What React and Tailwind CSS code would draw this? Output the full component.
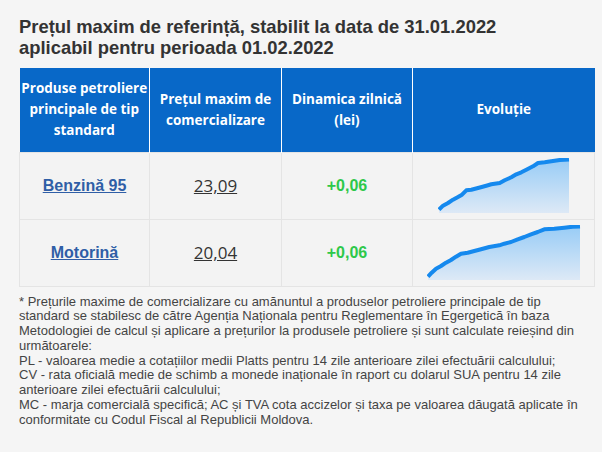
import React from 'react';

const rows = [
  {
    name: 'Benzină 95',
    price: '23,09',
    delta: '+0,06',
    chart: {
      w: 132,
      h: 55,
      pts: [
        [1, 51.7], [5, 47.7], [10, 45], [15, 41.7], [20, 39], [24, 36.7], [28.3, 32.3],
        [33.3, 31.7], [40, 30], [48.3, 27.7], [53.3, 26.3], [61.7, 25], [66.7, 22.3],
        [73.3, 19.3], [78.3, 16.3], [83.3, 14.3], [88.3, 11.7], [95, 8.3], [100, 5],
        [106.7, 4.3], [113.3, 3.3], [121.7, 2], [131, 1.4],
      ],
    },
  },
  {
    name: 'Motorină',
    price: '20,04',
    delta: '+0,06',
    chart: {
      w: 154,
      h: 55,
      pts: [
        [1, 51.7], [4.7, 47.7], [9, 43.7], [14, 41], [19, 37.7], [24, 35], [29, 31.7],
        [34, 28.7], [40.7, 27.7], [47.3, 26], [54, 24.3], [62.3, 22], [72.3, 20.3],
        [77.3, 18.7], [84, 17], [90.7, 14.3], [97.3, 12], [104, 9.3], [110.7, 7],
        [117.3, 4.3], [127.3, 3.7], [137.3, 2.7], [145.7, 1.7], [153, 1.4],
      ],
    },
  },
];

const Sparkline = ({ id, w, h, pts }) => {
  const line = pts.map((p, i) => `${i ? 'L' : 'M'}${p[0]},${p[1]}`).join(' ');
  const last = pts[pts.length - 1];
  const area = `${line} L${last[0]},${h} L${pts[0][0]},${h} Z`;
  return (
    <svg width={w} height={h} viewBox={`0 0 ${w} ${h}`} className="block mx-auto">
      <defs>
        <linearGradient id={id} x1="0" y1="0" x2="0" y2="1">
          <stop offset="0" stopColor="#98ccf6" />
          <stop offset="1" stopColor="#dde9f6" />
        </linearGradient>
      </defs>
      <path d={area} fill={`url(#${id})`} />
      <path d={line} fill="none" stroke="#1589ee" strokeWidth="4" strokeLinejoin="round" />
    </svg>
  );
};

const App = () => {
  return (
    <div className="min-h-[452px] bg-[#f5f5f5] pt-4 pl-[19px] pr-2 font-['Liberation_Sans',Arial,sans-serif]">
      <h2 className="text-[18.4px] leading-[21px] font-bold text-[#333]">
        Prețul maxim de referință, stabilit la data de 31.01.2022
        <br />
        aplicabil pentru perioada 01.02.2022
      </h2>

      <table className="mt-[10px] w-[575px] table-fixed border-collapse">
        <colgroup>
          <col className="w-[130px]" />
          <col className="w-[132px]" />
          <col className="w-[131px]" />
          <col className="w-[182px]" />
        </colgroup>
        <thead>
          <tr className="h-[84px] bg-[#0868c8] text-white font-['Open_Sans',sans-serif] text-[13.5px] leading-[21px] font-bold">
            <th className="px-0 py-[10px] text-center align-middle border-r border-white">
              Produse petroliere principale de tip standard
            </th>
            <th className="px-1 py-[10px] text-center align-middle border-r border-white">
              Prețul maxim de comercializare
            </th>
            <th className="px-1 py-[10px] text-center align-middle border-r border-white">
              Dinamica zilnică (lei)
            </th>
            <th className="px-1 py-[10px] text-center align-middle">Evoluție</th>
          </tr>
        </thead>
        <tbody>
          {rows.map((r, i) => (
            <tr key={r.name} className="h-[67px] bg-[#f3f3f3]">
              <td className="border border-[#e4e4e4] text-center align-middle">
                <a href="#" className="text-[16px] font-bold text-[#2f5ea6] underline">
                  {r.name}
                </a>
              </td>
              <td className="border border-[#e4e4e4] text-center align-middle">
                <span className="font-['Open_Sans',sans-serif] text-[17px] text-[#333] underline">
                  {r.price}
                </span>
              </td>
              <td className="border border-[#e4e4e4] text-center align-middle text-[16px] font-bold text-[#2ec84a]">
                {r.delta}
              </td>
              <td className="border border-[#e4e4e4] align-middle py-[5px]">
                <Sparkline id={`grad${i}`} {...r.chart} />
              </td>
            </tr>
          ))}
        </tbody>
      </table>

      <p className="mt-[8px] w-[575px] text-[13px] leading-[14.75px] text-[#444]">
        * Prețurile maxime de comercializare cu amănuntul a produselor petroliere principale de tip
        standard se stabilesc de către Agenția Naționala pentru Reglementare în Egergetică în baza
        Metodologiei de calcul și aplicare a prețurilor la produsele petroliere și sunt calculate
        reieșind din următoarele:
        <br />
        PL - valoarea medie a cotațiilor medii Platts pentru 14 zile anterioare zilei efectuării
        calculului;
        <br />
        CV - rata oficială medie de schimb a monede inaționale în raport cu dolarul SUA pentru 14
        zile anterioare zilei efectuării calculului;
        <br />
        MC - marja comercială specifică; AC și TVA cota accizelor și taxa pe valoarea dăugată
        aplicate în conformitate cu Codul Fiscal al Republicii Moldova.
      </p>
    </div>
  );
};

export default App;
